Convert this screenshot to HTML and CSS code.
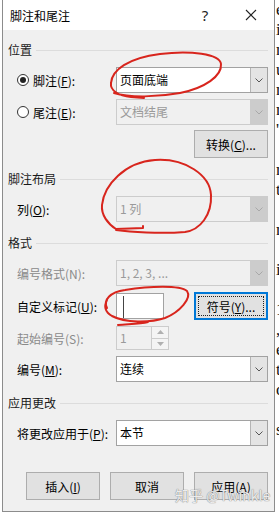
FILE: index.html
```html
<!DOCTYPE html>
<html lang="zh-CN">
<head>
    <meta charset="UTF-8">
    <meta name="viewport" content="width=device-width, initial-scale=1.0">
    <title>脚注和尾注</title>
    <link rel="stylesheet" href="styles.css">
</head>
<body>
    <div class="screen">
        <div class="edge"></div>

        <div class="dialog">
            <div class="titlebar">
                <span class="title">脚注和尾注</span>
                <span class="tb-btn help">?</span>
                <span class="tb-btn">
                    <svg width="12" height="12" viewBox="0 0 12 12"><path d="M1 1 L11 11 M11 1 L1 11" stroke="#222" stroke-width="1.1" fill="none"/></svg>
                </span>
            </div>

            <div class="content">
                <div class="group-head"><span>位置</span></div>

                <div class="row radio-row">
                    <span class="radio checked"></span>
                    <span class="lbl">脚注(<u>F</u>):</span>
                    <div class="combo"><span class="val">页面底端</span><span class="arrow"><svg width="8" height="5" viewBox="0 0 8 5"><path d="M0.5 0.5 L4 4 L7.5 0.5" stroke="#555" fill="none"/></svg></span></div>
                </div>
                <div class="row radio-row">
                    <span class="radio"></span>
                    <span class="lbl">尾注(<u>E</u>):</span>
                    <div class="combo disabled"><span class="val">文档结尾</span><span class="arrow"><svg width="8" height="5" viewBox="0 0 8 5"><path d="M0.5 0.5 L4 4 L7.5 0.5" stroke="#a8a8a8" fill="none"/></svg></span></div>
                </div>
                <div class="row btn-row tight">
                    <button class="btn">转换(<u>C</u>)...</button>
                </div>

                <div class="group-head"><span>脚注布局</span></div>
                <div class="row">
                    <span class="lbl">列(<u>O</u>):</span>
                    <div class="combo disabled"><span class="val">1 列</span><span class="arrow"><svg width="8" height="5" viewBox="0 0 8 5"><path d="M0.5 0.5 L4 4 L7.5 0.5" stroke="#a8a8a8" fill="none"/></svg></span></div>
                </div>

                <div class="group-head"><span>格式</span></div>
                <div class="row">
                    <span class="lbl off">编号格式(N):</span>
                    <div class="combo disabled"><span class="val">1, 2, 3, ...</span><span class="arrow"><svg width="8" height="5" viewBox="0 0 8 5"><path d="M0.5 0.5 L4 4 L7.5 0.5" stroke="#a8a8a8" fill="none"/></svg></span></div>
                </div>
                <div class="row mark-row">
                    <span class="lbl">自定义标记(<u>U</u>):</span>
                    <div class="mark-input"><span class="caret"></span></div>
                    <button class="btn focused"><span class="focus-ring">符号(<u>Y</u>)...</span></button>
                </div>
                <div class="row spin-row">
                    <span class="lbl off">起始编号(S):</span>
                    <div class="spin">
                        <span class="val">1</span>
                        <span class="spin-btns">
                            <span class="sb"><svg width="7" height="4" viewBox="0 0 7 4"><path d="M0 4 L3.5 0 L7 4 Z" fill="#b0b0b0"/></svg></span>
                            <span class="sb"><svg width="7" height="4" viewBox="0 0 7 4"><path d="M0 0 L3.5 4 L7 0 Z" fill="#b0b0b0"/></svg></span>
                        </span>
                    </div>
                </div>
                <div class="row">
                    <span class="lbl">编号(<u>M</u>):</span>
                    <div class="combo"><span class="val">连续</span><span class="arrow"><svg width="8" height="5" viewBox="0 0 8 5"><path d="M0.5 0.5 L4 4 L7.5 0.5" stroke="#555" fill="none"/></svg></span></div>
                </div>

                <div class="group-head"><span>应用更改</span></div>
                <div class="row">
                    <span class="lbl">将更改应用于(<u>P</u>):</span>
                    <div class="combo"><span class="val">本节</span><span class="arrow"><svg width="8" height="5" viewBox="0 0 8 5"><path d="M0.5 0.5 L4 4 L7.5 0.5" stroke="#555" fill="none"/></svg></span></div>
                </div>

                <div class="actions">
                    <button class="btn">插入(<u>I</u>)</button>
                    <button class="btn">取消</button>
                    <button class="btn">应用(<u>A</u>)</button>
                </div>
            </div>
        </div>

        <div class="doc-strip">
            <div>e</div><div>i</div><div>n</div><div>u</div><div>n</div><div>n</div><div>'</div><div>&nbsp;</div>
            <div>n</div><div>t</div><div>&nbsp;</div><div>n</div><div>&nbsp;</div><div>i</div><div>&nbsp;</div>
            <div>1</div><div>,</div><div>e.</div><div>t</div><div>o</div><div>&nbsp;</div><div>s:</div>
        </div>

        <!-- red pen marks drawn over the screenshot -->
        <svg class="ink" width="279" height="515" viewBox="0 0 279 515">
            <g fill="none" stroke="#d8251d" stroke-width="2" stroke-linecap="round" stroke-linejoin="round">
                <path d="M144 98 L131 97 C118 96 110 90 111 83 C112 70 128 58 160 54 C190 50 220 54 221 64 C222 76 205 88 180 93 C158 97 130 98 114 93"/>
                <path d="M143 226 L143 228 L116 229 C108 224 101 215 102 205 C104 185 125 162 155 160 C185 158 210 175 211 195 C212 215 200 230 185 232 C160 234 130 232 116 230"/>
                <path d="M107 308 C103 300 110 292 125 290 C150 286 180 285 187 291 C192 298 180 312 165 318 C150 323 125 323 112 316 C105 312 104 306 107 300 M118 325 C128 324 140 324 148 322"/>
            </g>
        </svg>

        <div class="watermark">知乎 @Twinkle</div>
    </div>
</body>
</html>
```

FILE: styles.css
```css
body {
    margin: 0;
    background-color: #ffffff;
    font-family: 'Noto Sans CJK SC', 'Noto Sans', sans-serif;
    font-size: 12px;
    color: #000;
}

.screen {
    position: relative;
    display: flex;
    width: 279px;
    height: 515px;
    overflow: hidden;
}

.edge {
    width: 2px;
    flex: none;
}

.dialog {
    width: 273px;
    flex: none;
    align-self: flex-start;
    box-sizing: border-box;
    border: 1px solid #8c8c8c;
    border-top: none;
    background-color: #f0f0f0;
}

.titlebar {
    height: 30px;
    background-color: #fff;
    display: flex;
    align-items: center;
    padding-left: 7px;
}

.title {
    flex: 1;
    font-size: 12px;
}

.tb-btn {
    width: 46px;
    height: 30px;
    display: flex;
    align-items: center;
    justify-content: center;
}

.help {
    font-family: 'Noto Sans', sans-serif;
    font-size: 15px;
    color: #222;
}

.content {
    display: flex;
    flex-direction: column;
    padding: 0 6px 11px 5px;
}

.group-head {
    display: flex;
    align-items: center;
    height: 16px;
    line-height: 16px;
    margin-top: 13px;
    gap: 4px;
    color: #1a1a1a;
}

.group-head:first-child {
    margin-top: 12px;
}

.group-head::after {
    content: "";
    flex: 1;
    height: 1px;
    background-color: #dcdcdc;
}

.row {
    display: flex;
    align-items: center;
    height: 26px;
    padding-left: 9px;
    margin-top: 6px;
}

.group-head + .row {
    margin-top: 9px;
}

.row.tight {
    margin-top: 5px;
}

.lbl {
    width: 99px;
    flex: none;
    white-space: nowrap;
}

.lbl.off {
    color: #8a8a8a;
}

.radio-row .lbl {
    width: 83px;
}

.radio {
    width: 12px;
    height: 12px;
    box-sizing: border-box;
    border: 1px solid #333;
    border-radius: 50%;
    background-color: #fff;
    margin-right: 4px;
    display: flex;
    align-items: center;
    justify-content: center;
}

.radio.checked::after {
    content: "";
    width: 6px;
    height: 6px;
    border-radius: 50%;
    background-color: #222;
}

.combo {
    flex: 1;
    height: 26px;
    box-sizing: border-box;
    border: 1px solid #a2a2a2;
    background-color: #fff;
    display: flex;
}

.combo .val {
    flex: 1;
    padding-left: 3px;
    line-height: 24px;
}

.combo .arrow {
    width: 16px;
    background-color: #e4e4e4;
    border-left: 1px solid #b4b4b4;
    display: flex;
    align-items: center;
    justify-content: center;
}

.combo.disabled {
    border-color: #cccccc;
    background-color: #f0f0f0;
    color: #9a9a9a;
}

.combo.disabled .arrow {
    background-color: #cccccc;
    border-left-color: #cccccc;
}

.btn-row {
    justify-content: flex-end;
    height: 28px;
}

.btn {
    width: 74px;
    height: 28px;
    box-sizing: border-box;
    border: 1px solid #adadad;
    background-color: #e1e1e1;
    font-family: inherit;
    font-size: 12px;
    color: #000;
    padding: 0;
}

.btn.focused {
    border: 2px solid #0078d7;
    padding: 2px;
    margin-left: auto;
}

.focus-ring {
    display: flex;
    align-items: center;
    justify-content: center;
    height: 100%;
    box-sizing: border-box;
    border: 1px dotted #222;
}

.mark-row {
    height: 28px;
}

.mark-input {
    width: 48px;
    height: 26px;
    box-sizing: border-box;
    border: 1px solid #a2a2a2;
    background-color: #fff;
    padding: 2px 0 0 6px;
}

.caret {
    display: block;
    width: 1px;
    height: 22px;
    background-color: #444;
}

.spin-row {
    height: 24px;
}

.spin {
    width: 53px;
    height: 24px;
    box-sizing: border-box;
    border: 1px solid #cccccc;
    display: flex;
    color: #9a9a9a;
}

.spin .val {
    flex: 1;
    padding-left: 3px;
    line-height: 22px;
}

.spin-btns {
    width: 16px;
    display: flex;
    flex-direction: column;
    border-left: 1px solid #cccccc;
}

.sb {
    flex: 1;
    display: flex;
    align-items: center;
    justify-content: center;
    background-color: #f4f4f4;
}

.sb + .sb {
    border-top: 1px solid #cccccc;
}

.actions {
    display: flex;
    justify-content: flex-end;
    gap: 10px;
    margin-top: 26px;
}

.doc-strip {
    width: 4px;
    flex: none;
    overflow: hidden;
    font-family: 'Liberation Serif', serif;
    font-size: 17px;
    line-height: 20px;
    color: #111;
    padding-left: 1px;
}

.ink {
    position: absolute;
    left: 0;
    top: 0;
    pointer-events: none;
}

.watermark {
    position: absolute;
    left: 175px;
    top: 487px;
    white-space: nowrap;
    font-family: 'Noto Sans CJK SC', sans-serif;
    font-size: 14px;
    line-height: 16px;
    color: rgba(255, 255, 255, 0.85);
    text-shadow: 0 0 1px #888, 0 0 1px #888;
}
```
